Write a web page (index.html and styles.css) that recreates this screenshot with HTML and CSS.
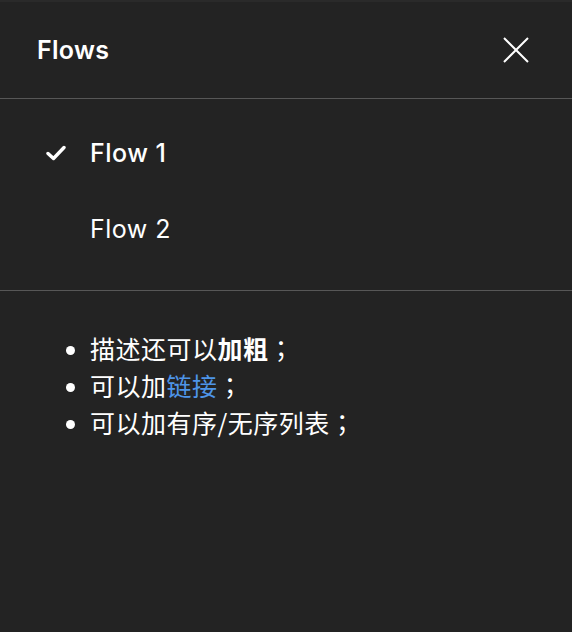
FILE: index.html
```html
<!DOCTYPE html>
<html>
<head>
<meta charset="utf-8">
<link rel="stylesheet" href="styles.css">
</head>
<body>
<div class="panel">
  <header class="head">
    <h1 class="title">Flows</h1>
    <button class="close" aria-label="Close">
      <svg width="26" height="26" viewBox="0 0 26 26"><path d="M1 1L25 25M25 1L1 25" stroke="#fff" stroke-width="2" fill="none"/></svg>
    </button>
  </header>
  <div class="flows">
    <div class="flow active">
      <span class="check"><svg width="20" height="16" viewBox="0 0 20 16"><path d="M2 8.5L7.5 13.5L18 2.5" stroke="#fff" stroke-width="3.4" fill="none" stroke-linecap="round" stroke-linejoin="round"/></svg></span>
      <span class="name">Flow 1</span>
    </div>
    <div class="flow">
      <span class="check"></span>
      <span class="name">Flow 2</span>
    </div>
  </div>
  <div class="desc">
    <ul class="list">
      <li>描述还可以<b>加粗</b><span class="punct">；</span></li>
      <li>可以加<a class="link" href="#">链接</a><span class="punct">；</span></li>
      <li>可以加有序/无序列表<span class="punct">；</span></li>
    </ul>
  </div>
</div>
</body>
</html>
```

FILE: styles.css
```css
html, body {
  margin: 0;
  padding: 0;
  background: #232323;
}
body {
  width: 572px;
  height: 632px;
  overflow: hidden;
  font-family: Inter, "Noto Sans CJK SC", sans-serif;
  color: #fff;
}
.panel {
  border-top: 2px solid #2a2a2a;
}
.head {
  height: 96px;
  display: flex;
  align-items: center;
  justify-content: space-between;
  padding: 0 43px 0 37px;
  border-bottom: 1px solid #575757;
}
.title {
  margin: 0;
  font-size: 25px;
  font-weight: 600;
  letter-spacing: 0.3px;
}
.close {
  background: none;
  border: 0;
  padding: 0;
  display: flex;
  width: 26px;
  height: 26px;
  cursor: pointer;
}
.flows {
  padding: 16px 0 23px;
  border-bottom: 1px solid #575757;
}
.flow {
  height: 76px;
  display: flex;
  align-items: center;
}
.check {
  width: 90px;
  display: flex;
  justify-content: flex-start;
  padding-left: 46px;
  box-sizing: border-box;
}
.name {
  font-size: 25px;
  font-weight: 400;
  letter-spacing: 0.5px;
}
.flow.active .name {
  font-weight: 500;
}
.desc {
  padding-top: 39px;
}
.list {
  margin: 0;
  padding-left: 90px;
  font-family: "Noto Sans CJK SC", sans-serif;
  font-size: 25px;
  line-height: 37px;
  letter-spacing: 0.5px;
}
.list li::marker {
  font-size: 22px;
}
.list b {
  font-weight: 700;
}
.punct {
  font-family: "Noto Sans CJK TC", sans-serif;
}
.link {
  color: #4e95e8;
  text-decoration: none;
}
```
